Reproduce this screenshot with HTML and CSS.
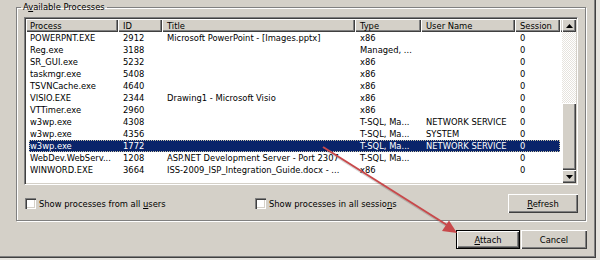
FILE: index.html
```html
<!DOCTYPE html>
<html lang="en">
<head>
    <meta charset="UTF-8">
    <title>Attach to Process</title>
    <link rel="stylesheet" href="styles.css">
</head>
<body>
<div class="page">
    <div class="dialog">
        <fieldset class="group">
            <legend>A<u>v</u>ailable Processes</legend>

            <div class="listview">
                <div class="table">
                    <div class="header">
                        <div class="th">Process</div>
                        <div class="th">ID</div>
                        <div class="th">Title</div>
                        <div class="th">Type</div>
                        <div class="th">User Name</div>
                        <div class="th">Session</div>
                        <div class="th"></div>
                    </div>
                    <div class="row"><span>POWERPNT.EXE</span><span>2912</span><span>Microsoft PowerPoint - [Images.pptx]</span><span>x86</span><span></span><span>0</span></div>
                    <div class="row"><span>Reg.exe</span><span>3188</span><span></span><span>Managed, ...</span><span></span><span>0</span></div>
                    <div class="row"><span>SR_GUI.exe</span><span>5232</span><span></span><span>x86</span><span></span><span>0</span></div>
                    <div class="row"><span>taskmgr.exe</span><span>5408</span><span></span><span>x86</span><span></span><span>0</span></div>
                    <div class="row"><span>TSVNCache.exe</span><span>4640</span><span></span><span>x86</span><span></span><span>0</span></div>
                    <div class="row"><span>VISIO.EXE</span><span>2344</span><span>Drawing1 - Microsoft Visio</span><span>x86</span><span></span><span>0</span></div>
                    <div class="row"><span>VTTimer.exe</span><span>2960</span><span></span><span>x86</span><span></span><span>0</span></div>
                    <div class="row"><span>w3wp.exe</span><span>4308</span><span></span><span>T-SQL, Ma...</span><span>NETWORK SERVICE</span><span>0</span></div>
                    <div class="row"><span>w3wp.exe</span><span>4356</span><span></span><span>T-SQL, Ma...</span><span>SYSTEM</span><span>0</span></div>
                    <div class="row selected"><span>w3wp.exe</span><span>1772</span><span></span><span>T-SQL, Ma...</span><span>NETWORK SERVICE</span><span>0</span></div>
                    <div class="row"><span>WebDev.WebServ...</span><span>1208</span><span>ASP.NET Development Server - Port 2307</span><span>T-SQL, Ma...</span><span></span><span>0</span></div>
                    <div class="row"><span>WINWORD.EXE</span><span>3664</span><span>ISS-2009_ISP_Integration_Guide.docx - ...</span><span>x86</span><span></span><span>0</span></div>
                </div>
                <div class="scrollbar">
                    <div class="sb-btn"><svg width="7" height="4" viewBox="0 0 7 4"><polygon points="3.5,0 7,4 0,4" fill="#000"/></svg></div>
                    <div class="sb-track"></div>
                    <div class="sb-thumb"></div>
                    <div class="sb-btn"><svg width="7" height="4" viewBox="0 0 7 4"><polygon points="0,0 7,0 3.5,4" fill="#000"/></svg></div>
                </div>
            </div>

            <div class="options">
                <label class="check"><span class="box"></span><span>Show processes from all <u>u</u>sers</span></label>
                <label class="check"><span class="box"></span><span>Show processes in all sessio<u>n</u>s</span></label>
                <button class="btn refresh"><u>R</u>efresh</button>
            </div>
        </fieldset>

        <div class="actions">
            <button class="btn default attach"><u>A</u>ttach</button>
            <button class="btn cancel">Cancel</button>
        </div>
    </div>

    <!-- callout arrow pasted over the screenshot -->
    <svg class="arrow" width="600" height="260" viewBox="0 0 600 260">
        <line x1="323" y1="148" x2="447" y2="226" stroke="rgba(0,0,0,0.15)" stroke-width="2" transform="translate(1,1)"/>
        <line x1="323" y1="147" x2="447" y2="225" stroke="#c8494b" stroke-width="2"/>
        <polygon points="457,233 442,231 449,220.5" fill="#c8494b"/>
    </svg>
</div>
</body>
</html>
```

FILE: styles.css
```css
body { margin: 0; background: #fff; font: 9.3px "DejaVu Sans Condensed", "Liberation Sans", Arial, sans-serif; color: #000; }
.page { position: relative; width: 600px; height: 260px; background: #e6e4df; overflow: hidden; }

.dialog { width: 596px; height: 258px; box-sizing: border-box; padding: 1px 8px 0 16px; background: #d4d0c8;
    border-right: 1px solid #404040; border-bottom: 1px solid #404040; box-shadow: inset -1px -1px #808080; }

.group { margin: 0 1px 0 0; padding: 4px 7px 7px 7px; min-width: 0; border: 1px solid #808080; box-shadow: 1px 1px #fff, inset 1px 1px #fff; }
.group legend { padding: 0 2px; margin-left: -3px; line-height: 12px; }

.listview { display: grid; grid-template-columns: 1fr 14px; height: 168px; box-sizing: border-box; padding: 1px; background: #fff;
    border: 1px solid; border-color: #808080 #fff #fff #808080; box-shadow: inset 1px 1px #404040, inset -1px -1px #d4d0c8; }

.table { overflow: hidden; }
.header { display: grid; grid-template-columns: 92px 44px 193px 66px 94px 45px 1fr; height: 13px; }
.th { background: #d4d0c8; line-height: 13px; padding-left: 5px; white-space: nowrap; overflow: hidden;
    box-shadow: inset 1px 1px #fff, inset -1px -1px #404040, inset -2px -2px #808080; }
.th:first-child { padding-left: 4px; }

.row { display: grid; grid-template-columns: 89px 44px 193px 66px 94px 45px; margin-left: 3px; width: 531px; height: 12px; line-height: 12px; box-sizing: border-box; }
.row span { padding-left: 5px; white-space: nowrap; overflow: hidden; }
.row span:first-child { padding-left: 1px; }
.row.selected { background: #0a246a; color: #fff; outline: 1px dotted #c9c3a8; outline-offset: -1px; }

.scrollbar { display: grid; grid-template-rows: 13px 71px 67px 13px; }
.sb-btn, .sb-thumb { background: #d4d0c8; box-shadow: inset 1px 1px #fff, inset -1px -1px #404040, inset -2px -2px #808080; }
.sb-btn { display: flex; align-items: center; justify-content: center; }
.sb-track { background-color: #fff; background-image: repeating-conic-gradient(#fff 0 25%, #e6e3dd 0 50%); background-size: 2px 2px; }

.options { display: grid; grid-template-columns: 230px 1fr 70px; align-items: center; margin-top: 9px; height: 19px; }
.check { display: flex; align-items: center; gap: 3px; margin-left: 1px; white-space: nowrap; }
.box { width: 11px; height: 11px; box-sizing: border-box; background: #fff;
    box-shadow: inset 1px 1px #808080, inset 2px 2px #404040, inset -1px -1px #fff, inset -2px -2px #d4d0c8; }

.btn { font: inherit; color: #000; background: #d4d0c8; border: 0; padding: 0; height: 19px; box-sizing: border-box;
    box-shadow: inset 1px 1px #fff, inset -1px -1px #404040, inset -2px -2px #808080; }
.refresh { width: 70px; }

.actions { display: flex; justify-content: flex-end; gap: 1px; margin-top: 9px; }
.attach { width: 64px; }
.cancel { width: 66px; }
.btn.default { border: 1px solid #000; }

.arrow { position: absolute; left: 0; top: 0; pointer-events: none; }
```
